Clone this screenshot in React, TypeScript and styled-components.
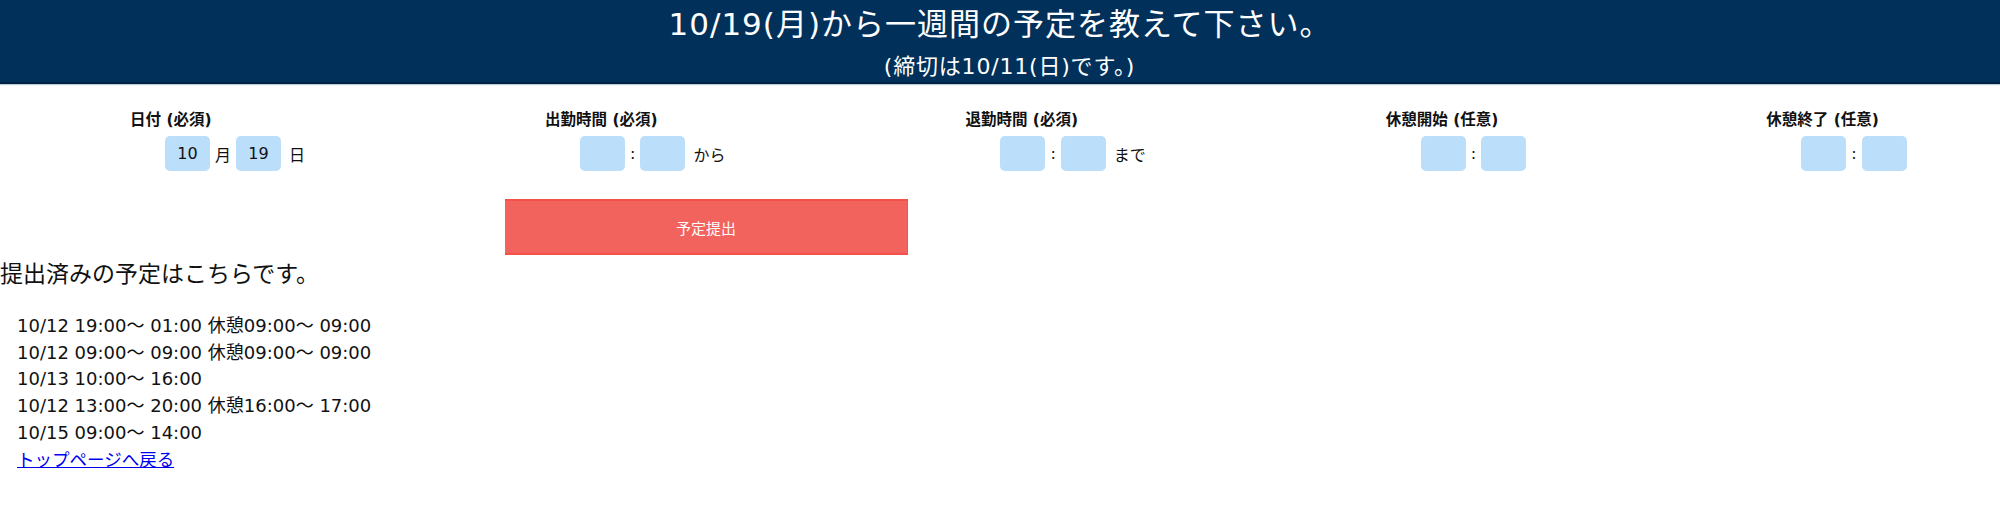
import React from "react"
import styled, { createGlobalStyle } from "styled-components"

const GlobalStyle = createGlobalStyle`
        body {
                margin: 0;
                background: #fff;
                color: #111;
                font-family: "DejaVu Sans", "Noto Sans CJK JP", sans-serif;
        }
`;

const Header = styled.header`
        background: #01315a;
        color: #fff;
        text-align: center;
        height: 82px;
        border-bottom: 2px solid #00213f;
        box-shadow: 0 1px 1px rgba(1, 49, 90, 0.25);
`;

const Title = styled.h1`
        margin: 0;
        padding-top: 5px;
        font-size: 31px;
        line-height: 38px;
        font-weight: normal;
        letter-spacing: 1px;
`;

const Sub = styled.p`
        margin: 9px 0 0;
        padding-left: 19px;
        font-size: 22px;
        line-height: 30px;
        letter-spacing: 0.8px;
`;

const Fields = styled.div`
        display: flex;
        gap: 240px;
        padding: 26px 0 0 130px;
`;

const Field = styled.div`
        display: flex;
        flex-direction: column;
`;

const Label = styled.label`
        font-size: 15.5px;
        line-height: 20px;
        font-weight: bold;
        white-space: nowrap;
`;

const InputLine = styled.div`
        display: flex;
        align-items: center;
        gap: 5px;
        margin-top: 6px;
        padding-left: 35px;
        font-size: 16px;
        white-space: nowrap;
`;

const Tail = styled.span`
        margin-left: 3px;
`;

const Box = styled.input`
        width: 45px;
        height: 35px;
        box-sizing: border-box;
        padding: 0;
        border: none;
        border-radius: 5px;
        background: #bbdefb;
        text-align: center;
        font-family: inherit;
        font-size: 16px;
        color: #111;
`;

const Submit = styled.button`
        display: block;
        margin: 28px 0 0 505px;
        width: 403px;
        height: 56px;
        box-sizing: border-box;
        background: #f3635d;
        border: none;
        border-top: 2px solid #f5514b;
        border-bottom: 2px solid #f5514b;
        border-right: 1px solid #ef5650;
        color: #fff;
        font-family: inherit;
        font-size: 15px;
`;

const Heading = styled.h3`
        margin: 4px 0 0;
        font-size: 23px;
        line-height: 30px;
        font-weight: normal;
`;

const Schedule = styled.ul`
        list-style: none;
        margin: 24px 0 0;
        padding: 0 0 0 17px;
        font-size: 18px;
        line-height: 26.7px;
`;

const Back = styled.a`
        color: #0000ee;
        font-size: 17.5px;
        line-height: 26.7px;
        padding-left: 17px;
`;

type FieldDef = {
        label: string
        first?: string
        second?: string
        mid: string
        tail?: string
}

const fields: FieldDef[] = [
        { label: "日付 (必須)", first: "10", second: "19", mid: "月", tail: "日" },
        { label: "出勤時間 (必須)", mid: ":", tail: "から" },
        { label: "退勤時間 (必須)", mid: ":", tail: "まで" },
        { label: "休憩開始 (任意)", mid: ":" },
        { label: "休憩終了 (任意)", mid: ":" },
]

const done = [
        "10/12 19:00〜 01:00 休憩09:00〜 09:00",
        "10/12 09:00〜 09:00 休憩09:00〜 09:00",
        "10/13 10:00〜 16:00",
        "10/12 13:00〜 20:00 休憩16:00〜 17:00",
        "10/15 09:00〜 14:00",
]

const App: React.FunctionComponent = () => {
        return (
                <>
                        <GlobalStyle />
                        <Header>
                                <Title>10/19(月)から一週間の予定を教えて下さい。</Title>
                                <Sub>(締切は10/11(日)です。)</Sub>
                        </Header>
                        <Fields>
                                {fields.map(f => (
                                        <Field key={f.label}>
                                                <Label>{f.label}</Label>
                                                <InputLine>
                                                        <Box defaultValue={f.first} />
                                                        <span>{f.mid}</span>
                                                        <Box defaultValue={f.second} />
                                                        {f.tail && <Tail>{f.tail}</Tail>}
                                                </InputLine>
                                        </Field>
                                ))}
                        </Fields>
                        <Submit>予定提出</Submit>
                        <Heading>提出済みの予定はこちらです。</Heading>
                        <Schedule>
                                {done.map((d, i) => <li key={i}>{d}</li>)}
                        </Schedule>
                        <Back href="#">トップページへ戻る</Back>
                </>
        )
}

export default App;
